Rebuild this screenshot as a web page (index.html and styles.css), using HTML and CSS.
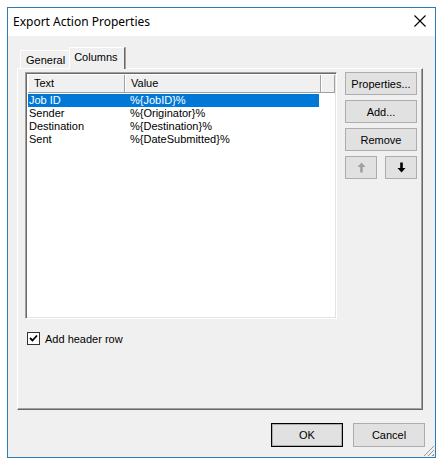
FILE: index.html
```html
<!DOCTYPE html>
<html>
<head>
<meta charset="utf-8">
<link rel="stylesheet" href="styles.css">
</head>
<body>
<div class="window">
  <div class="titlebar">
    <span class="title">Export Action Properties</span>
    <svg class="close" width="12" height="12" viewBox="0 0 12 12"><path d="M0.5 0.5L11.5 11.5M11.5 0.5L0.5 11.5" stroke="#000" stroke-width="1.1"/></svg>
  </div>
  <div class="client">
    <div class="tabs">
      <div class="tab">General</div>
      <div class="tab active">Columns</div>
    </div>
    <div class="panel">
      <div class="top-row">
        <div class="list">
          <div class="header">
            <div class="hcol c1">Text</div>
            <div class="hcol c2">Value</div>
            <div class="hcol c3"></div>
          </div>
          <div class="row selected"><span class="c1">Job ID</span><span class="c2">%{JobID}%</span></div>
          <div class="row"><span class="c1">Sender</span><span class="c2">%{Originator}%</span></div>
          <div class="row"><span class="c1">Destination</span><span class="c2">%{Destination}%</span></div>
          <div class="row"><span class="c1">Sent</span><span class="c2">%{DateSubmitted}%</span></div>
        </div>
        <div class="side">
          <button class="btn">Properties...</button>
          <button class="btn">Add...</button>
          <button class="btn">Remove</button>
          <div class="arrows">
            <button class="btn small"><svg width="9" height="11" viewBox="0 0 9 11"><path d="M4.5 0.5L8.5 5H5.8V10.5H3.2V5H0.5Z" fill="#a0a0a0"/></svg></button>
            <button class="btn small"><svg width="9" height="11" viewBox="0 0 9 11"><path d="M4.5 10.5L8.5 6H5.8V0.5H3.2V6H0.5Z" fill="#000"/></svg></button>
          </div>
        </div>
      </div>
      <label class="check">
        <span class="box"><svg width="9" height="9" viewBox="0 0 9 9"><path d="M1 4L3.5 6.5L8 1.5" stroke="#000" stroke-width="1.8" fill="none"/></svg></span>
        <span>Add header row</span>
      </label>
    </div>
    <div class="footer">
      <button class="btn default">OK</button>
      <button class="btn">Cancel</button>
    </div>
    <div class="grip"></div>
  </div>
</div>
</body>
</html>
```

FILE: styles.css
```css
html, body {
  margin: 0;
  padding: 0;
  background: #ffffff;
}
body {
  padding: 7px 0 0 7px;
  font-family: "Liberation Sans", Arial, sans-serif;
  font-size: 11px;
  color: #000;
}
.window {
  width: 427px;
  height: 449px;
  border: 1px solid #2b7bb4;
  display: flex;
  flex-direction: column;
  background: #f0f0f0;
}
.titlebar {
  height: 28px;
  background: #ffffff;
  display: flex;
  align-items: center;
  justify-content: space-between;
  padding: 0 9px 0 5px;
}
.title {
  font-family: "Noto Sans", "Open Sans", sans-serif;
  font-size: 12px;
  margin-top: -2px;
}
.close {
  margin-top: -2px;
}
.client {
  flex: 1;
  position: relative;
  display: flex;
  flex-direction: column;
  padding: 10px 0 0 9px;
}
.tabs {
  display: flex;
  align-items: flex-end;
  height: 22px;
  padding-left: 3px;
}
.tab {
  height: 18px;
  line-height: 18px;
  padding: 0 5px;
  border: 1px solid #ffffff;
  border-right-color: #a0a0a0;
  border-bottom: none;
  box-sizing: border-box;
}
.tab.active {
  height: 22px;
  line-height: 18px;
  padding: 0 6px 0 4px;
  margin-left: -2px;
  background: #f0f0f0;
  position: relative;
  border-right: 1px solid #696969;
  box-shadow: 1px 0 0 #a0a0a0;
  margin-bottom: -1px;
  z-index: 1;
}
.panel {
  border: 1px solid #ffffff;
  border-right-color: #696969;
  border-bottom-color: #696969;
  box-shadow: inset -1px -1px 0 #a0a0a0;
  padding: 3px 0 0 7px;
  box-sizing: border-box;
  width: 406px;
  height: 342px;
  display: flex;
  flex-direction: column;
}
.top-row {
  display: flex;
  gap: 8px;
}
.list {
  width: 312px;
  height: 247px;
  box-sizing: border-box;
  background: #ffffff;
  border: 1px solid #a0a0a0;
  border-right-color: #ffffff;
  border-bottom-color: #ffffff;
  box-shadow: inset 1px 1px 0 #696969, inset -1px -1px 0 #e3e3e3;
  padding: 2px 1px 0 2px;
}
.header {
  display: flex;
  height: 17px;
  background: #f0f0f0;
  border-bottom: 1px solid #a0a0a0;
  margin-bottom: 1px;
}
.hcol {
  box-sizing: border-box;
  height: 17px;
  line-height: 16px;
  padding-left: 5px;
  border-left: 1px solid #ffffff;
  border-right: 1px solid #a0a0a0;
}
.header .c1 { width: 97px; }
.header .c2 { width: 196px; }
.header .c3 { flex: 1; }
.row {
  display: flex;
  height: 13px;
  line-height: 13px;
  width: 291px;
}
.row .c1 {
  width: 97px;
  padding-left: 1px;
  box-sizing: border-box;
}
.row .c2 {
  padding-left: 5px;
}
.row.selected {
  background: #0078d7;
  color: #ffffff;
}
.side {
  display: flex;
  flex-direction: column;
  gap: 5px;
  padding-top: 0;
  width: 72px;
}
.btn {
  font-family: "Liberation Sans", Arial, sans-serif;
  font-size: 11px;
  color: #000;
  height: 23px;
  background: #e1e1e1;
  border: 1px solid #adadad;
  padding: 0;
  margin: 0;
  display: flex;
  align-items: center;
  justify-content: center;
  box-sizing: border-box;
}
.side .btn {
  width: 72px;
}
.arrows {
  display: flex;
  justify-content: space-between;
}
.side .btn.small {
  width: 32px;
}
.check {
  display: flex;
  align-items: center;
  gap: 5px;
  margin-top: 13px;
  padding-left: 2px;
}
.box {
  width: 13px;
  height: 13px;
  box-sizing: border-box;
  background: #ffffff;
  border: 1px solid #333333;
  display: flex;
  align-items: center;
  justify-content: center;
}
.footer {
  display: flex;
  gap: 10px;
  justify-content: flex-end;
  padding: 13px 10px 0 0;
}
.footer .btn {
  width: 72px;
  height: 24px;
}
.btn.default {
  border: 1px solid #000000;
  box-shadow: inset 0 0 0 1px #adadad;
}
.grip {
  position: absolute;
  right: 1px;
  bottom: 1px;
  width: 11px;
  height: 11px;
  background: repeating-linear-gradient(135deg, transparent 0 2px, #9a9a9a 2px 3px);
  clip-path: polygon(100% 0, 100% 100%, 0 100%);
}
```
